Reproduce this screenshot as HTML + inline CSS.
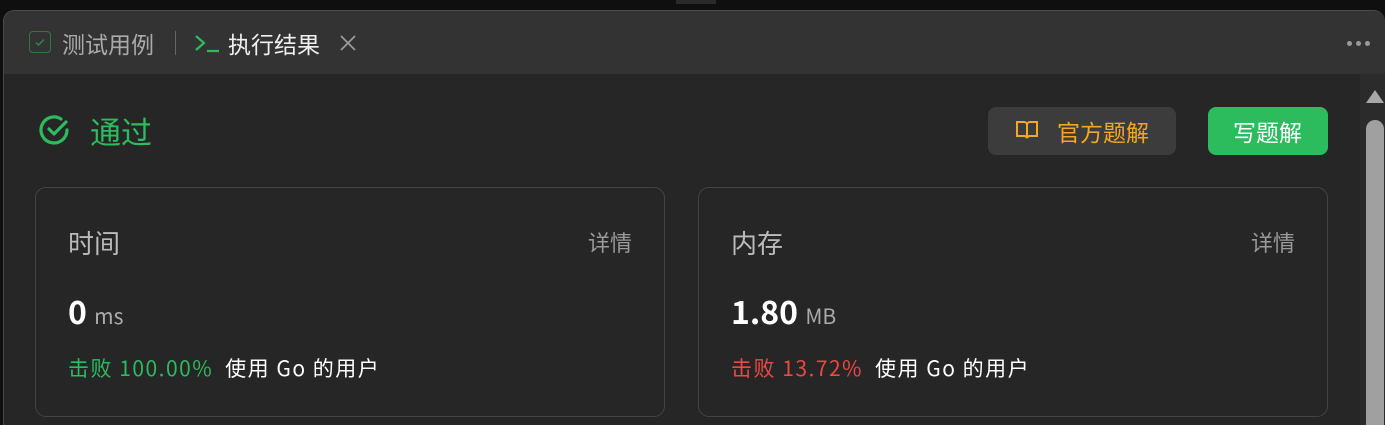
<!DOCTYPE html>
<html><head><meta charset="utf-8"><style>
*{margin:0;padding:0;box-sizing:border-box}
html,body{width:1385px;height:425px;overflow:hidden}
body{background:#0f0f0f;font-family:"Noto Sans CJK SC","Liberation Sans",sans-serif;position:relative}
.panel{position:absolute;left:3px;top:10px;width:1382px;height:415px;background:#262626;border:1px solid #4a4a4a;border-bottom:none;border-right:none;border-radius:11px 11px 0 0;overflow:hidden}
.hdr{position:absolute;left:0;top:0;right:0;height:63px;background:#333}
.abs{position:absolute;white-space:nowrap;line-height:1}
.card{position:absolute;top:176px;width:630px;height:230px;border:1.5px solid #444;border-radius:11px}
.st{letter-spacing:1.5px}
</style></head><body>
<div class="abs" style="left:676px;top:0;width:40px;height:4px;background:#2a2a2a"></div>
<div class="panel">
 <div class="hdr">
  <div class="abs" style="left:25px;top:20px;width:22px;height:22px;border:1.5px solid #2c7a3f;border-radius:4px"></div>
  <svg class="abs" style="left:30px;top:25px" width="12" height="12"><path d="M2 6.5l2.5 2.5L10 3.5" stroke="#2c8a45" stroke-width="1.5" fill="none"/></svg>
  <div class="abs" style="left:58px;top:21px;font-size:23px;color:#aaa">测试用例</div>
  <div class="abs" style="left:171px;top:20px;width:1px;height:24px;background:#666"></div>
  <svg class="abs" style="left:190px;top:22px" width="28" height="22"><path d="M2 3l8 7-8 7M13 18h12" stroke="#2cbb5d" stroke-width="2.2" fill="none"/></svg>
  <div class="abs" style="left:224px;top:21px;font-size:23px;color:#f0f0f0">执行结果</div>
  <svg class="abs" style="left:336px;top:24px" width="16" height="16"><path d="M1 1l14 14M15 1L1 15" stroke="#999" stroke-width="1.8"/></svg>
  <div class="abs" style="left:1343px;top:30px;width:5px;height:5px;border-radius:3px;background:#999;box-shadow:9px 0 #999,18px 0 #999"></div>
 </div>
 <div class="abs" style="left:1356px;top:63px;width:26px;height:352px;background:#2b2b2b"></div>
 <div class="abs" style="left:1362px;top:79px;width:0;height:0;border-left:9px solid transparent;border-right:9px solid transparent;border-bottom:13px solid #a8a8a8"></div>
 <div class="abs" style="left:1362px;top:109px;width:18px;height:306px;border-radius:9px 9px 0 0;background:#a0a0a0"></div>
 <svg class="abs" style="left:33px;top:102px" width="36" height="36"><path d="M30 17a13 13 0 1 1-6-11" stroke="#2cbb5d" stroke-width="3.2" fill="none" stroke-linecap="round"/><path d="M12 16l5 5 12-12" stroke="#2cbb5d" stroke-width="3.2" fill="none" stroke-linecap="round" stroke-linejoin="round"/></svg>
 <div class="abs" style="left:86px;top:104px;font-size:31px;color:#2cbb5d">通过</div>
 <div class="abs" style="left:984px;top:96px;width:188px;height:48px;background:#3c3c3c;border-radius:8px"></div>
 <svg class="abs" style="left:1011px;top:109px" width="24" height="20"><path d="M2 2h7a3 3 0 0 1 3 3v13a3 3 0 0 0-3-2H2zM22 2h-7a3 3 0 0 0-3 3v13a3 3 0 0 1 3-2h7z" stroke="#f5a623" stroke-width="2" fill="none"/></svg>
 <div class="abs" style="left:1053px;top:109px;font-size:23px;color:#f5a623">官方题解</div>
 <div class="abs" style="left:1204px;top:96px;width:120px;height:48px;background:#2cbb5d;border-radius:8px"></div>
 <div class="abs" style="left:1229px;top:109px;font-size:23px;color:#fff">写题解</div>
 <div class="card" style="left:31px">
  <div class="abs" style="left:32px;top:42px;font-size:26px;color:#bbb">时间</div>
  <div class="abs" style="right:32px;top:43px;font-size:22px;color:#999">详情</div>
  <div class="abs" style="left:32px;top:107px;font-size:32px;color:#fff;font-weight:bold">0 <span style="font-size:21px;color:#aaa;font-weight:normal">ms</span></div>
  <div class="abs st" style="left:32px;top:170px;font-size:21px;color:#2cbb5d">击败 100.00%<span style="color:#fff;margin-left:12px">使用 Go 的用户</span></div>
 </div>
 <div class="card" style="left:694px">
  <div class="abs" style="left:32px;top:42px;font-size:26px;color:#bbb">内存</div>
  <div class="abs" style="right:32px;top:43px;font-size:22px;color:#999">详情</div>
  <div class="abs" style="left:32px;top:107px;font-size:32px;color:#fff;font-weight:bold">1.80 <span style="font-size:21px;color:#aaa;font-weight:normal">MB</span></div>
  <div class="abs st" style="left:32px;top:170px;font-size:21px;color:#ef4743">击败 13.72%<span style="color:#fff;margin-left:12px">使用 Go 的用户</span></div>
 </div>
</div>
</body></html>
